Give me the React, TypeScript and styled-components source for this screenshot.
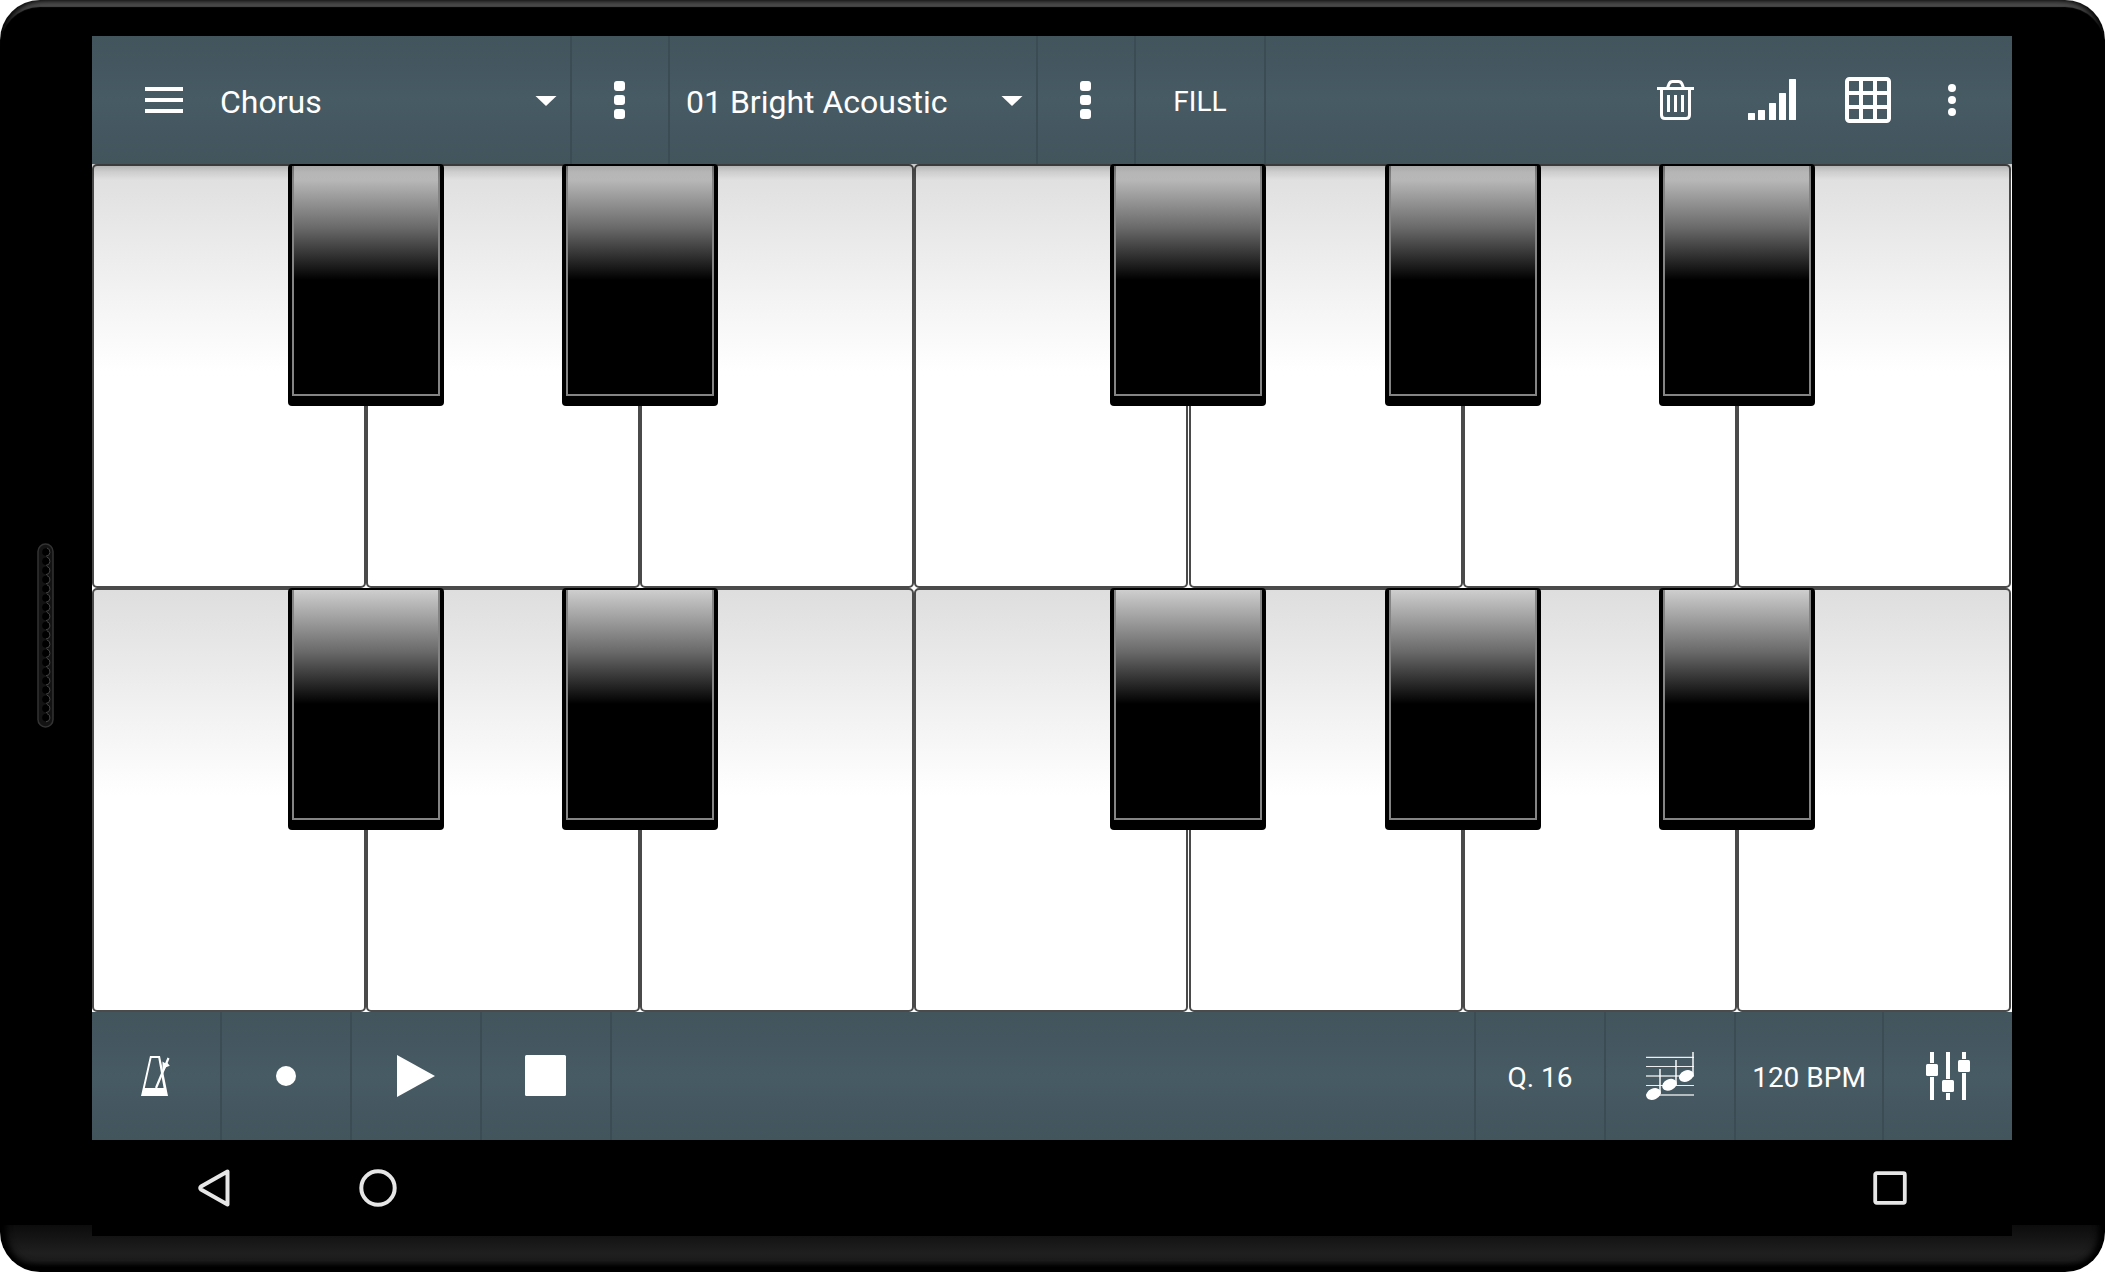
import React from "react";
import styled, { createGlobalStyle } from "styled-components";

const GlobalStyle = createGlobalStyle`
  *, *::before, *::after { box-sizing: border-box; }
  body { margin: 0; background: #fff; }
  button, select { font: inherit; color: inherit; border: 0; margin: 0; background: none; }
  button { cursor: pointer; }
  svg { display: block; flex: none; }
`;

const Device = styled.div`
  display: grid;
  grid-template-columns: 92px minmax(0, 1fr) 93px;
  height: 100vh;
  padding: 36px 0;
  overflow: hidden;
  border-radius: 40px;
  color: #fff;
  font-family: Roboto, "Liberation Sans", sans-serif;
  background: linear-gradient(#0c0c0c, #1f1f1f 60%, #1c1c1c 75%, #000 94%) bottom / 100% 47px no-repeat #000;
  box-shadow:
    inset 6px 0 6px -1px #000,
    inset -6px 0 6px -1px #000,
    inset 0 7px 1px #4b4b4b,
    inset 0 0 8px 4px #000;
`;

const Bezel = styled.div`
  display: flex;
  align-items: center;
  justify-content: center;
  padding-right: 2px;
`;

const Screen = styled.main`
  display: flex;
  flex-direction: column;
  min-width: 0;
  background: #000;
`;

const Bar = styled.div`
  display: flex;
  flex: none;
  height: 128px;
  background: linear-gradient(#42545c, #475b65 50%, #42545c);
`;

const divider = "2px solid #3b4c55";

const Cell = styled.div<{ $width: number; $edge: "left" | "right" }>`
  position: relative;
  display: flex;
  flex: 0 1 ${(p) => p.$width}px;
  align-items: stretch;
  border-right: ${(p) => (p.$edge === "right" ? divider : "0")};
  border-left: ${(p) => (p.$edge === "left" ? divider : "0")};
`;

const BarButton = styled.button<{ $width?: number }>`
  display: flex;
  align-items: center;
  justify-content: center;
  flex: ${(p) => (p.$width ? "none" : "1")};
  width: ${(p) => (p.$width ? `${p.$width}px` : "auto")};
  padding: 0;
`;

const TextButton = styled(BarButton)`
  padding-top: 4px;
  font-size: 28px;
  line-height: 32px;
  white-space: nowrap;
`;

const MenuButton = styled(BarButton)`
  padding-left: 16px;
`;

const Picker = styled.select<{ $indent?: number }>`
  appearance: none;
  flex: 1;
  min-width: 0;
  padding: 4px 48px 0 ${(p) => p.$indent ?? 0}px;
  font-size: 32px;
  line-height: 40px;
  option { color: #222; }
`;

const Caret = styled.svg`
  position: absolute;
  right: 12px;
  top: 50%;
  margin-top: -4px;
  pointer-events: none;
`;

const Spacer = styled.div`
  flex: 1;
`;

const Actions = styled.div`
  display: flex;
  padding-right: 24px;
`;

const Keyboard = styled.div`
  position: relative;
  display: flex;
  flex: 1;
  flex-direction: column;
  min-height: 0;
  background: #fff;
  &::before {
    content: "";
    position: absolute;
    z-index: 2;
    inset: 0 0 auto;
    height: 16px;
    pointer-events: none;
    background: linear-gradient(rgba(0, 0, 0, 0.22), rgba(0, 0, 0, 0.08) 50%, transparent);
  }
`;

const Octave = styled.div`
  display: flex;
  flex: 1;
  min-height: 0;
  padding-right: 1px;
`;

const KeySlot = styled.div<{ $split?: boolean }>`
  position: relative;
  display: flex;
  flex: 1;
  margin-left: ${(p) => (p.$split ? 1 : 0)}px;
`;

const WhiteKey = styled.button`
  flex: 1;
  padding: 0;
  border: 2px solid #4a4a4a;
  border-radius: 5px;
  background: linear-gradient(#dedede, #fff 49%);
`;

const BlackKey = styled.button`
  position: absolute;
  z-index: 1;
  top: 0;
  right: -78px;
  display: flex;
  width: 156px;
  height: 57%;
  padding: 2px 4px 10px;
  border-radius: 4px;
  background: #000;
`;

const KeyFace = styled.span`
  flex: 1;
  align-self: stretch;
  border: solid #848484;
  border-width: 0 2px 2px;
  background: linear-gradient(#cecece, #6a6a6a 27%, #000 50%);
`;

const NavBar = styled.nav`
  display: flex;
  justify-content: space-between;
  height: 96px;
  padding: 0 40px;
`;

const NavGroup = styled.div`
  display: flex;
`;

const NavButton = styled.button`
  display: flex;
  align-items: center;
  justify-content: center;
  width: 164px;
  padding: 0;
`;

const HOLES = Array.from({ length: 19 }, (_, i) => 9 + i * 9.2);

const Speaker = () => (
  <svg width="17" height="186" viewBox="0 0 17 186" aria-hidden="true">
    <rect x="1" y="1" width="15" height="183" rx="7.5" fill="#131313" stroke="#333" strokeWidth="1.5" />
    {HOLES.map((y) => (
      <g key={y}>
        <circle cx="9" cy={y} r="3.8" fill="#000" />
        <path d={`M10 ${y - 4}A4.2 4.2 0 0 1 9 ${y + 4.2}`} fill="none" stroke="#444" strokeWidth="1" />
      </g>
    ))}
  </svg>
);

const MenuIcon = () => (
  <svg width="38" height="28" viewBox="0 0 38 28" fill="#fff">
    <path d="M0 1h38v4H0zM0 12h38v4H0zM0 23h38v4H0z" />
  </svg>
);

const BlockDotsIcon = () => (
  <svg width="12" height="38" viewBox="0 0 12 38" fill="#fff">
    {[0, 14, 28].map((y) => (
      <rect key={y} x="0" y={y} width="11" height="10" rx="3" />
    ))}
  </svg>
);

const TrashIcon = () => (
  <svg width="38" height="40" viewBox="0 0 38 40" fill="none" stroke="#fff" strokeWidth="3">
    <path d="M0 8.5h37M4.5 9v26q0 3.5 3.5 3.5h21q3.5 0 3.5-3.5V9" />
    <path d="M10.5 8l1.5-4q1-2.5 3.5-2.500h6q2.500 0 3.500 2.500l1.500 4" />
    <path d="M11.5 15v17M18.500 15v17M25.500 15v17" />
  </svg>
);

const LevelsIcon = () => (
  <svg width="48" height="42" viewBox="0 0 48 42" fill="#fff">
    <rect x="0" y="34" width="7" height="7" rx="0.5" />
    <rect x="10" y="31" width="7" height="10" rx="0.5" />
    <rect x="21" y="24" width="7" height="17" rx="0.5" />
    <rect x="31" y="14" width="7" height="27" rx="0.5" />
    <rect x="41" y="0" width="7" height="41" rx="0.5" />
  </svg>
);

const GridIcon = () => (
  <svg width="46" height="46" viewBox="0 0 46 46" fill="none" stroke="#fff" strokeWidth="4">
    <rect x="2" y="2" width="42" height="42" rx="2.5" />
    <path d="M16 2v42M30 2v42M2 16h42M2 30h42" />
  </svg>
);

const OverflowIcon = () => (
  <svg width="8" height="32" viewBox="0 0 8 32" fill="#fff">
    <circle cx="4" cy="4" r="4" />
    <circle cx="4" cy="16" r="4" />
    <circle cx="4" cy="28" r="4" />
  </svg>
);

const MetronomeIcon = () => (
  <svg width="30" height="40" viewBox="0 0 30 40" fill="#fff">
    <path fillRule="evenodd" d="M9 0h10l8 40H0zM10.5 2L3.8 32h18.8L17.3 2z" />
    <path d="M15 32L27.5 2" stroke="#fff" strokeWidth="2.2" />
    <path d="M21.5 5.5l3 2 1.5-1 2.8 3.200-3.800 1.500-3 5-.5-4z" />
  </svg>
);

const RecordIcon = () => (
  <svg width="20" height="20" viewBox="0 0 20 20" fill="#fff">
    <circle cx="10" cy="10" r="10" />
  </svg>
);

const PlayIcon = () => (
  <svg width="38" height="42" viewBox="0 0 38 42" fill="#fff">
    <path d="M0 0L38 21L0 42z" />
  </svg>
);

const StopIcon = () => (
  <svg width="42" height="42" viewBox="0 0 42 42" fill="#fff">
    <rect width="41" height="41" rx="1.5" />
  </svg>
);

const NotesIcon = () => (
  <svg width="48" height="48" viewBox="0 0 48 48" fill="#fff" stroke="#fff">
    <path d="M0 5.3h48M0 14.5h48M0 33.5h48" strokeWidth="1.2" opacity="0.9" />
    <path d="M0 24h48M0 43h48" strokeWidth="2" opacity="0.6" />
    <path d="M14 17v25M30 8v25M47 0v24" strokeWidth="1.6" opacity="0.9" />
    <g stroke="none">
      <ellipse cx="7.5" cy="42" rx="7.6" ry="5.5" transform="rotate(-25 7.5 42)" />
      <ellipse cx="23.5" cy="32.7" rx="7.6" ry="5.5" transform="rotate(-25 23.5 32.7)" />
      <ellipse cx="40.3" cy="24" rx="7.6" ry="5.5" transform="rotate(-25 40.3 24)" />
    </g>
  </svg>
);

const MixerIcon = () => (
  <svg width="44" height="48" viewBox="0 0 44 48" fill="#fff">
    <path d="M4 0h4v11H4zM4 25h4v23H4zM20 0h4v27h-4zM20 41h4v7h-4zM36 0h4v7h-4zM36 21h4v27h-4z" />
    <rect x="0" y="12" width="12" height="12" rx="1.5" />
    <rect x="16" y="28" width="12" height="12" rx="1.5" />
    <rect x="32" y="8" width="12" height="12" rx="1.5" />
  </svg>
);

const BackIcon = () => (
  <svg width="32" height="38" viewBox="0 0 32 38" fill="none" stroke="#e6e6e6" strokeWidth="4" strokeLinejoin="round">
    <path d="M29.500 2.500L3 17.600q-1.600 1.400 0 2.800L29.500 35.500z" />
  </svg>
);

const HomeIcon = () => (
  <svg width="38" height="38" viewBox="0 0 38 38" fill="none" stroke="#e6e6e6" strokeWidth="4">
    <circle cx="19" cy="19" r="16.7" />
  </svg>
);

const RecentsIcon = () => (
  <svg width="34" height="34" viewBox="0 0 34 34" fill="none" stroke="#e6e6e6" strokeWidth="3.8">
    <rect x="2.2" y="2.2" width="29.6" height="29.6" rx="1.5" />
  </svg>
);

const NOTES = ["C", "D", "E", "F", "G", "A", "B"];
const SHARPS = new Set(["C", "D", "F", "G", "A"]);

const KeyRow = ({ octave }: { octave: number }) => (
  <Octave role="group" aria-label={`Octave ${octave}`}>
    {NOTES.map((note) => (
      <KeySlot key={note} $split={note === "G"}>
        <WhiteKey aria-label={`${note}${octave}`} />
        {SHARPS.has(note) && (
          <BlackKey aria-label={`${note} sharp ${octave}`}>
            <KeyFace />
          </BlackKey>
        )}
      </KeySlot>
    ))}
  </Octave>
);

const DropCaret = () => (
  <Caret width="24" height="10" viewBox="0 0 24 10" fill="#fff" aria-hidden="true">
    <path d="M1.5 0h21L12 10z" />
  </Caret>
);

export default function App() {
  return (
    <>
      <GlobalStyle />
      <Device>
        <Bezel>
          <Speaker />
        </Bezel>
        <Screen>
          <Bar>
            <Cell $width={480} $edge="right">
              <MenuButton $width={128} aria-label="Menu"><MenuIcon /></MenuButton>
              <Picker aria-label="Part" defaultValue="Chorus">
                <option>Chorus</option>
              </Picker>
              <DropCaret />
            </Cell>
            <Cell $width={98} $edge="right">
              <BarButton aria-label="Part options"><BlockDotsIcon /></BarButton>
            </Cell>
            <Cell $width={368} $edge="right">
              <Picker $indent={16} aria-label="Instrument" defaultValue="01 Bright Acoustic">
                <option>01 Bright Acoustic</option>
              </Picker>
              <DropCaret />
            </Cell>
            <Cell $width={98} $edge="right">
              <BarButton aria-label="Instrument options"><BlockDotsIcon /></BarButton>
            </Cell>
            <Cell $width={130} $edge="right">
              <TextButton>FILL</TextButton>
            </Cell>
            <Spacer />
            <Actions>
              <BarButton $width={96} aria-label="Delete"><TrashIcon /></BarButton>
              <BarButton $width={96} aria-label="Velocity"><LevelsIcon /></BarButton>
              <BarButton $width={96} aria-label="Grid"><GridIcon /></BarButton>
              <BarButton $width={72} aria-label="More"><OverflowIcon /></BarButton>
            </Actions>
          </Bar>
          <Keyboard>
            <KeyRow octave={5} />
            <KeyRow octave={4} />
          </Keyboard>
          <Bar>
            <Cell $width={130} $edge="right">
              <BarButton aria-label="Metronome"><MetronomeIcon /></BarButton>
            </Cell>
            <Cell $width={130} $edge="right">
              <BarButton aria-label="Record"><RecordIcon /></BarButton>
            </Cell>
            <Cell $width={130} $edge="right">
              <BarButton aria-label="Play"><PlayIcon /></BarButton>
            </Cell>
            <Cell $width={130} $edge="right">
              <BarButton aria-label="Stop"><StopIcon /></BarButton>
            </Cell>
            <Spacer />
            <Cell $width={130} $edge="left">
              <TextButton>Q. 16</TextButton>
            </Cell>
            <Cell $width={130} $edge="left">
              <BarButton aria-label="Score"><NotesIcon /></BarButton>
            </Cell>
            <Cell $width={148} $edge="left">
              <TextButton>120 BPM</TextButton>
            </Cell>
            <Cell $width={130} $edge="left">
              <BarButton aria-label="Mixer"><MixerIcon /></BarButton>
            </Cell>
          </Bar>
          <NavBar aria-label="System">
            <NavGroup>
              <NavButton aria-label="Back"><BackIcon /></NavButton>
              <NavButton aria-label="Home"><HomeIcon /></NavButton>
            </NavGroup>
            <NavButton aria-label="Recent apps"><RecentsIcon /></NavButton>
          </NavBar>
        </Screen>
        <Bezel />
      </Device>
    </>
  );
}
